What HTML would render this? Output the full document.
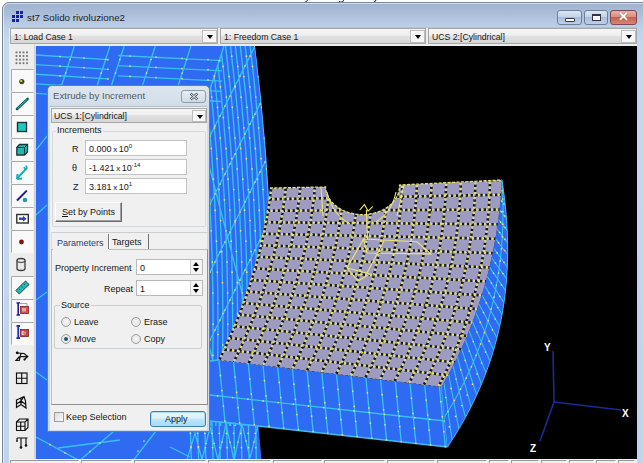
<!DOCTYPE html>
<html><head><meta charset="utf-8">
<style>
*{margin:0;padding:0;box-sizing:border-box}
html,body{width:643px;height:463px;overflow:hidden;background:#fff;font-family:"Liberation Sans",sans-serif;color:#000}
.a{position:absolute}
#frame{left:2px;top:2px;width:650px;height:470px;border:1px solid #7a8796;border-radius:7px 7px 0 0;background:linear-gradient(#9fb3cf 0,#a9bdd8 10px,#bcd0e8 24px,#c6d8ec 40px,#c0d4ea 100%)}
#frame2{left:3px;top:3px;width:650px;height:470px;border:1px solid rgba(255,255,255,.55);border-radius:6px 6px 0 0}
#title{left:27px;top:12px;font-size:9.8px;color:#1e1e1e;white-space:nowrap}
#ico{left:11px;top:11px;width:13px;height:13px}
.wb{position:absolute;top:10px;height:15px;border:1px solid #6f7f98;border-radius:3px;background:linear-gradient(#dbe6f4,#c2d3ea 45%,#a9bedc 50%,#bcd0ea)}
#cls{background:linear-gradient(#eab0a6,#dc8e82 45%,#c95e4e 50%,#d98676);border-color:#7b4a52}
#strip{left:9px;top:27px;width:628px;height:19px;background:#ececec;border-top:1px solid #b7c2cf}
.combo{position:absolute;height:16px;top:28px;border:1px solid #a7a7a7;background:linear-gradient(#f6f6f6 0,#efefef 45%,#e1e1e1 50%,#d6d6d6 100%);font-size:8.7px;color:#151515;padding:3px 0 0 3px;white-space:nowrap}
.dd{position:absolute;right:0px;top:1px;width:15px;height:13px;background:#f7f7f7;border:1px solid #bdbdbd}
.dd:after{content:"";position:absolute;left:3.5px;top:4px;border-left:3.5px solid transparent;border-right:3.5px solid transparent;border-top:4px solid #000}
#tb{left:9px;top:44px;width:26px;height:415px;background:#ededed;border-right:1px solid #d4d4d4}
#view{left:36px;top:46px;width:601px;height:413px;background:#000;overflow:hidden}
#status{left:9px;top:459px;width:628px;height:4px;background:#f0f0f0;overflow:hidden}
.btn{position:absolute;left:2px;width:22px;height:23px;border-top:1px solid #a8a8a8;border-left:1px solid #a8a8a8;border-right:1px solid #fff;background:#f8f8f8}
#dlg{left:47px;top:85px;width:163px;height:347px;border:1px solid #6f7d8d;border-radius:5px 5px 0 0;background:linear-gradient(#dde5ee,#d3dde8 20px,#cbd7e3)}
.in{position:absolute;background:#f0f0f0}
.lbl{position:absolute;font-size:9px;color:#151515;white-space:nowrap}
.fld{position:absolute;background:#fff;border:1px solid #c3c3c3;font-size:9px;color:#151515;padding:3px 0 0 3px;white-space:nowrap}
.fld sup{font-size:6px;vertical-align:0;position:relative;top:-4px}
.grp{position:absolute;border:1px solid #d3d9de;border-radius:2px}
.radio{position:absolute;width:10px;height:10px;border-radius:50%;border:1px solid #a0a0a0;background:radial-gradient(#fbfbfb,#d9d9d9)}
.spin{position:absolute;right:0;top:0;width:12px;height:14px;border-left:1px solid #d0d0d0;background:#f4f4f4}
.spin:before{content:"";position:absolute;left:2px;top:2px;border-left:3.5px solid transparent;border-right:3.5px solid transparent;border-bottom:4px solid #000}
.spin:after{content:"";position:absolute;left:2px;top:8px;border-left:3.5px solid transparent;border-right:3.5px solid transparent;border-top:4px solid #000}
</style></head><body>
<svg class="a" id="desc" style="left:0;top:0" width="643" height="4"><path d="M307.5,0 Q307,2 305,2.2 M343.5,0 Q343.5,2.2 341,2.2 Q339.5,2.2 339,1 M376,0 Q375.5,2 373.5,2.2" stroke="#222" stroke-width="1" fill="none"/></svg>
<div class="a" id="frame"></div>
<div class="a" id="frame2"></div>
<svg class="a" id="ico" viewBox="0 0 13 13"><g fill="#1420a8"><rect x="5" y="0" width="3" height="3"/><rect x="9" y="0" width="3" height="3"/><rect x="1" y="4" width="3" height="3"/><rect x="5" y="4" width="3" height="3"/><rect x="9" y="4" width="3" height="3"/><rect x="1" y="8" width="3" height="3"/><rect x="5" y="8" width="3" height="3"/></g></svg>
<div class="a" id="title">st7 Solido rivoluzione2</div>
<div class="wb" style="left:557px;width:25px"><div style="position:absolute;left:7px;top:7px;width:10px;height:4px;border:1px solid #334;background:#fff;border-radius:1px"></div></div>
<div class="wb" style="left:584px;width:24px"><div style="position:absolute;left:7px;top:3px;width:9px;height:7px;border:1px solid #334;border-top-width:2px;background:#fff"></div></div>
<div class="wb" id="cls" style="left:610px;width:27px"><div style="position:absolute;left:7px;top:-2px;color:#fff;font-size:13px;font-weight:bold;text-shadow:0 0 1px #633">&#x2715;</div></div>
<div class="a" id="strip"></div>
<div class="combo" style="left:10px;width:208px">1: Load Case 1<div class="dd"></div></div>
<div class="combo" style="left:220px;width:206px">1: Freedom Case 1<div class="dd"></div></div>
<div class="combo" style="left:428px;width:209px">UCS 2:[Cylindrical]<div class="dd"></div></div>
<div class="a" id="tb">
<svg width="26" height="415" viewBox="9 44 26 415" style="position:absolute;left:0;top:0">
<g fill="#707070">
<rect x="15.6" y="51.5" width="1.8" height="1.8"/><rect x="15.6" y="55.1" width="1.8" height="1.8"/><rect x="15.6" y="58.7" width="1.8" height="1.8"/><rect x="15.6" y="62.3" width="1.8" height="1.8"/><rect x="19.1" y="51.5" width="1.8" height="1.8"/><rect x="19.1" y="55.1" width="1.8" height="1.8"/><rect x="19.1" y="58.7" width="1.8" height="1.8"/><rect x="19.1" y="62.3" width="1.8" height="1.8"/><rect x="22.6" y="51.5" width="1.8" height="1.8"/><rect x="22.6" y="55.1" width="1.8" height="1.8"/><rect x="22.6" y="58.7" width="1.8" height="1.8"/><rect x="22.6" y="62.3" width="1.8" height="1.8"/><rect x="26.1" y="51.5" width="1.8" height="1.8"/><rect x="26.1" y="55.1" width="1.8" height="1.8"/><rect x="26.1" y="58.7" width="1.8" height="1.8"/><rect x="26.1" y="62.3" width="1.8" height="1.8"/></g>
<path d="M11,91 V69 M11,69 H33" stroke="#a9a9a9" stroke-width="1" fill="none" transform="translate(0.5,0.5)"/><rect x="12" y="70" width="21" height="22" fill="#f9f9f9"/><path d="M11,114 V92 M11,92 H33" stroke="#a9a9a9" stroke-width="1" fill="none" transform="translate(0.5,0.5)"/><rect x="12" y="93" width="21" height="22" fill="#f9f9f9"/><path d="M11,137 V115 M11,115 H33" stroke="#a9a9a9" stroke-width="1" fill="none" transform="translate(0.5,0.5)"/><rect x="12" y="116" width="21" height="22" fill="#f9f9f9"/><path d="M11,160 V138 M11,138 H33" stroke="#a9a9a9" stroke-width="1" fill="none" transform="translate(0.5,0.5)"/><rect x="12" y="139" width="21" height="22" fill="#f9f9f9"/><path d="M11,183 V161 M11,161 H33" stroke="#a9a9a9" stroke-width="1" fill="none" transform="translate(0.5,0.5)"/><rect x="12" y="162" width="21" height="22" fill="#f9f9f9"/><path d="M11,206 V184 M11,184 H33" stroke="#a9a9a9" stroke-width="1" fill="none" transform="translate(0.5,0.5)"/><rect x="12" y="185" width="21" height="22" fill="#f9f9f9"/><path d="M11,229 V207 M11,207 H33" stroke="#a9a9a9" stroke-width="1" fill="none" transform="translate(0.5,0.5)"/><rect x="12" y="208" width="21" height="22" fill="#f9f9f9"/><path d="M11,252 V230 M11,230 H33" stroke="#a9a9a9" stroke-width="1" fill="none" transform="translate(0.5,0.5)"/><rect x="12" y="231" width="21" height="22" fill="#f9f9f9"/><path d="M11,298 V276 M11,276 H33" stroke="#a9a9a9" stroke-width="1" fill="none" transform="translate(0.5,0.5)"/><rect x="12" y="277" width="21" height="22" fill="#f9f9f9"/><path d="M11,321 V299 M11,299 H33" stroke="#a9a9a9" stroke-width="1" fill="none" transform="translate(0.5,0.5)"/><rect x="12" y="300" width="21" height="22" fill="#f9f9f9"/><path d="M11,344 V322 M11,322 H33" stroke="#a9a9a9" stroke-width="1" fill="none" transform="translate(0.5,0.5)"/><rect x="12" y="323" width="21" height="22" fill="#f9f9f9"/>
<circle cx="21.8" cy="81.6" r="2.6" fill="#4a4a1a"/><circle cx="21.2" cy="81" r="1.1" fill="#e0e060"/>
<path d="M17,109 L27.6,99" stroke="#0d5a5a" stroke-width="2.6" stroke-linecap="round"/><path d="M17.5,108.5 L27,99.5" stroke="#2ac8c8" stroke-width="1"/>
<rect x="17.5" y="122.5" width="9" height="9" fill="#20c8c0" stroke="#17393a" stroke-width="1.4"/>
<path d="M16.8,147.5 L19.5,144.5 L27.5,144.5 L27.5,152 L24.5,155 L16.8,155 Z" fill="#20b8b0" stroke="#17393a" stroke-width="1.3"/><path d="M16.8,147.5 H24.5 V155 M24.5,147.5 L27.5,144.5" stroke="#17393a" stroke-width="1" fill="none"/>
<path d="M17.5,178 L27,168" stroke="#18b0b0" stroke-width="2"/><path d="M17,179 L17.5,174 M17,179 L22,178.5" stroke="#18b0b0" stroke-width="2"/><path d="M24,167 L25,170 M26,165.5 L27,168.5 M27.5,167 L24.5,169" stroke="#18b0b0" stroke-width="1.4"/>
<path d="M17,200.5 L26.8,190.6" stroke="#1a1f8a" stroke-width="2"/><circle cx="25" cy="200" r="2.3" fill="#1aa0a0"/>
<rect x="16.8" y="214.5" width="11.5" height="8.5" fill="#fff" stroke="#303030" stroke-width="1.4"/><path d="M19,217.5 H23 V215.8 L26.5,218.8 L23,221.8 V220 H19 Z" fill="#2a40d0"/>
<circle cx="21.5" cy="242" r="2.4" fill="#8a1010"/>
<path d="M17,260.5 A4,2 0 0 1 25,260.5 V268.5 A4,2 0 0 1 17,268.5 Z" fill="#e8e8e8" stroke="#3a3a3a" stroke-width="1.3"/><path d="M17,260.5 A4,2 0 0 0 25,260.5" stroke="#3a3a3a" stroke-width="1" fill="none"/>
<path d="M15.8,290.5 L25.5,281 L29,284.5 L19.3,294 Z" fill="#22b8b8" stroke="#1d4a4a" stroke-width="1"/><path d="M19,289 L20,290 M21.5,286.5 L22.5,287.5 M24,284 L25,285" stroke="#1d4a4a" stroke-width="0.8"/>
<path d="M16.5,303 H20 M18.2,303 V315 M16.5,315 H20" stroke="#1a2090" stroke-width="1.6"/><path d="M19,303.5 H27 V306" stroke="#909090" stroke-width="0.8" fill="none"/><rect x="20.5" y="306.5" width="8" height="7" fill="#d05050" stroke="#802020" stroke-width="0.8"/><rect x="22" y="308" width="4" height="3.5" fill="#f0a0a0"/>
<path d="M16.5,326 H20 M18.2,326 V338 M16.5,338 H20" stroke="#1a30d0" stroke-width="1.8"/><rect x="20.5" y="329.5" width="8" height="7" fill="#c04848" stroke="#802020" stroke-width="0.8"/><path d="M22,331.5 h2 M22,333 h2 M22,334.5 h2 M22,331.5 v3 M25,331.5 v3" stroke="#fff" stroke-width="0.7"/>
<g stroke="#101010" stroke-width="1.15" fill="none">
<path d="M17.2,353 L24,353.5 L27.8,356.5 L24.5,359.5 M21,353.5 L19.2,360.5 L16,360.5 L19.5,356.5 M20,356.6 L27.8,356.5" stroke-width="1.2"/>
<rect x="16.5" y="373" width="10.5" height="10.5"/><path d="M21.7,373 V383.5 M16.5,378.2 H27"/>
<path d="M16.5,400 L24,396.5 L25.5,401 L26,408 L21,404.5 L16.5,407.5 Z M21,398 L21,404.5 M16.5,404 L21,401 L25.8,404.5 M24,396.5 L21,401" stroke-width="1.2"/>
<path d="M16.5,422 L19.5,419 H28 V427.5 L25,430.5 H16.5 Z M16.5,422 H25 V430.5 M25,422 L28,419 M20.7,422 V430.5 M16.5,426.2 H25"/>
<path d="M17,438 H27.5 M17,438 V440.5 M21,438 V447 M26,438 V445"/>
</g>
<g fill="#101010"><circle cx="21" cy="447.5" r="1.3"/><circle cx="26" cy="445.5" r="1.3"/><circle cx="17" cy="441" r="0.9"/><circle cx="17.2" cy="352.8" r="1.4"/><circle cx="24.5" cy="359.6" r="1.1"/></g>
</svg></div>
<div class="a" id="view"><!--VIEW--><svg width="601" height="413" viewBox="36 46 601 413" style="position:absolute;left:0;top:0"><defs><clipPath id="lbc"><path d="M30,40 L255,40 L255,46 Q277,219.4 272,397 L258.5,426 L262.4,470 L30,470 Z"/></clipPath></defs><path d="M30,40 L255,40 L255,46 Q277,219.4 272,397 L258.5,426 L262.4,470 L30,470 Z" fill="#2e6af2"/><defs><clipPath id="sfc"><path d="M224,46 L255,46 Q277,219.4 272,397 L258.5,426 L200,426 L200,120 Z"/></clipPath></defs><g clip-path="url(#lbc)"><path d="M36,55.0 L108,59.7 M36,64.6 L108,69.3 M36,74.2 L108,78.9 M36,83.8 L108,88.5 M36,93.4 L108,98.1 M118,55.5 L222,60.7 M118,65.7 L222,70.9 M118,75.9 L222,81.1 M118,86.1 L222,91.3 M118,96.3 L222,101.5 M74.4,46 L56.9,100 M110.0,46 L92.5,100 M124.2,46 L106.7,100 M155.3,46 L137.8,100 M191.0,46 L173.5,100 M224,46 L200,120 M190.0,421 L191.5,462 M197.3,421 L198.7,462 M204.6,421 L205.9,462 M211.9,421 L213.1,462 M219.2,421 L220.3,462 M226.5,421 L227.5,462 M233.8,421 L234.7,462 M241.1,421 L241.9,462 M248.4,421 L249.1,462 M255.7,421 L256.3,462 M263.0,421 L263.5,462 M187.0,460.0 L195.0,433.0 L202.0,460.0 L210.0,427.0 L218.0,460.0 L226.0,424.0 L234.0,460.0 L242.0,424.0 L250.0,458.0 L258.0,426.0 M170,447 L190,457 M36,437 L82,462 M114,431 L78,462 M156,431 L132,462 M58,448 L120,440 M36,150 L47,136 M36,215 L47,205 M36,300 L47,292 M36,372 L47,380" stroke="#38c0f0" stroke-width="1.35" fill="none" /><g fill="#e8e070"><circle cx="60.0" cy="56.6" r="0.85"/><circle cx="84.0" cy="58.1" r="0.85"/><circle cx="108.0" cy="59.7" r="0.85"/><circle cx="60.0" cy="66.2" r="0.85"/><circle cx="84.0" cy="67.7" r="0.85"/><circle cx="108.0" cy="69.3" r="0.85"/><circle cx="60.0" cy="75.8" r="0.85"/><circle cx="84.0" cy="77.3" r="0.85"/><circle cx="108.0" cy="78.9" r="0.85"/><circle cx="60.0" cy="85.4" r="0.85"/><circle cx="84.0" cy="86.9" r="0.85"/><circle cx="108.0" cy="88.5" r="0.85"/><circle cx="60.0" cy="95.0" r="0.85"/><circle cx="84.0" cy="96.5" r="0.85"/><circle cx="108.0" cy="98.1" r="0.85"/><circle cx="130.0" cy="56.0" r="0.85"/><circle cx="156.0" cy="57.2" r="0.85"/><circle cx="182.0" cy="58.3" r="0.85"/><circle cx="208.0" cy="59.5" r="0.85"/><circle cx="130.0" cy="66.2" r="0.85"/><circle cx="156.0" cy="67.4" r="0.85"/><circle cx="182.0" cy="68.5" r="0.85"/><circle cx="208.0" cy="69.7" r="0.85"/><circle cx="130.0" cy="76.4" r="0.85"/><circle cx="156.0" cy="77.6" r="0.85"/><circle cx="182.0" cy="78.7" r="0.85"/><circle cx="208.0" cy="79.9" r="0.85"/><circle cx="130.0" cy="86.6" r="0.85"/><circle cx="156.0" cy="87.8" r="0.85"/><circle cx="182.0" cy="88.9" r="0.85"/><circle cx="208.0" cy="90.1" r="0.85"/><circle cx="130.0" cy="96.8" r="0.85"/><circle cx="156.0" cy="98.0" r="0.85"/><circle cx="182.0" cy="99.1" r="0.85"/><circle cx="208.0" cy="100.3" r="0.85"/><circle cx="70.0" cy="59.5" r="0.85"/><circle cx="65.7" cy="73.0" r="0.85"/><circle cx="61.3" cy="86.5" r="0.85"/><circle cx="105.6" cy="59.5" r="0.85"/><circle cx="101.2" cy="73.0" r="0.85"/><circle cx="96.9" cy="86.5" r="0.85"/><circle cx="119.8" cy="59.5" r="0.85"/><circle cx="115.5" cy="73.0" r="0.85"/><circle cx="111.1" cy="86.5" r="0.85"/><circle cx="150.9" cy="59.5" r="0.85"/><circle cx="146.6" cy="73.0" r="0.85"/><circle cx="142.2" cy="86.5" r="0.85"/><circle cx="186.6" cy="59.5" r="0.85"/><circle cx="182.2" cy="73.0" r="0.85"/><circle cx="177.9" cy="86.5" r="0.85"/><circle cx="219.2" cy="60.8" r="0.85"/><circle cx="214.4" cy="75.6" r="0.85"/><circle cx="209.6" cy="90.4" r="0.85"/><circle cx="204.8" cy="105.2" r="0.85"/><circle cx="190.4" cy="433.3" r="0.85"/><circle cx="191.0" cy="447.6" r="0.85"/><circle cx="191.4" cy="459.9" r="0.85"/><circle cx="197.6" cy="433.3" r="0.85"/><circle cx="198.2" cy="447.6" r="0.85"/><circle cx="198.6" cy="459.9" r="0.85"/><circle cx="204.8" cy="433.3" r="0.85"/><circle cx="205.4" cy="447.6" r="0.85"/><circle cx="205.8" cy="459.9" r="0.85"/><circle cx="212.0" cy="433.3" r="0.85"/><circle cx="212.6" cy="447.6" r="0.85"/><circle cx="213.0" cy="459.9" r="0.85"/><circle cx="219.2" cy="433.3" r="0.85"/><circle cx="219.8" cy="447.6" r="0.85"/><circle cx="220.2" cy="459.9" r="0.85"/><circle cx="226.4" cy="433.3" r="0.85"/><circle cx="227.0" cy="447.6" r="0.85"/><circle cx="227.4" cy="459.9" r="0.85"/><circle cx="233.6" cy="433.3" r="0.85"/><circle cx="234.2" cy="447.6" r="0.85"/><circle cx="234.6" cy="459.9" r="0.85"/><circle cx="240.8" cy="433.3" r="0.85"/><circle cx="241.4" cy="447.6" r="0.85"/><circle cx="241.8" cy="459.9" r="0.85"/><circle cx="248.0" cy="433.3" r="0.85"/><circle cx="248.6" cy="447.6" r="0.85"/><circle cx="249.0" cy="459.9" r="0.85"/><circle cx="255.2" cy="433.3" r="0.85"/><circle cx="255.8" cy="447.6" r="0.85"/><circle cx="256.2" cy="459.9" r="0.85"/><circle cx="262.4" cy="433.3" r="0.85"/><circle cx="263.0" cy="447.6" r="0.85"/><circle cx="263.4" cy="459.9" r="0.85"/><circle cx="191.0" cy="446.5" r="0.85"/><circle cx="198.5" cy="446.5" r="0.85"/><circle cx="206.0" cy="443.5" r="0.85"/><circle cx="214.0" cy="443.5" r="0.85"/><circle cx="222.0" cy="442.0" r="0.85"/><circle cx="230.0" cy="442.0" r="0.85"/><circle cx="238.0" cy="442.0" r="0.85"/><circle cx="246.0" cy="441.0" r="0.85"/><circle cx="254.0" cy="442.0" r="0.85"/><circle cx="50.0" cy="444.6" r="0.85"/><circle cx="65.0" cy="452.8" r="0.85"/><circle cx="100.0" cy="443.0" r="0.85"/><circle cx="90.0" cy="451.5" r="0.85"/><circle cx="144.0" cy="441.0" r="0.85"/><circle cx="138.0" cy="451.0" r="0.85"/></g></g><g clip-path="url(#sfc)"><path d="M255.0,46.0 Q280.0,250.0 268.0,460.0 M250.1,46.0 Q275.1,250.0 263.1,460.0 M245.2,46.0 Q270.2,250.0 258.2,460.0 M240.3,46.0 Q265.3,250.0 253.3,460.0 M235.4,46.0 Q260.4,250.0 248.4,460.0 M230.5,46.0 Q255.5,250.0 243.5,460.0 M225.6,46.0 Q250.6,250.0 238.6,460.0 M220.7,46.0 Q245.7,250.0 233.7,460.0 M215.8,46.0 Q240.8,250.0 228.8,460.0 M210.9,46.0 Q235.9,250.0 223.9,460.0 M206.0,46.0 Q231.0,250.0 219.0,460.0 M201.1,46.0 Q226.1,250.0 214.1,460.0 M196.2,46.0 Q221.2,250.0 209.2,460.0 M191.3,46.0 Q216.3,250.0 204.3,460.0 M186.4,46.0 Q211.4,250.0 199.4,460.0 M275.0,6.0 L205.0,146.0 M275.0,74.0 L205.0,214.0 M275.0,142.0 L205.0,282.0 M275.0,210.0 L205.0,350.0 M275.0,278.0 L205.0,418.0 M275.0,346.0 L205.0,486.0 M275.0,414.0 L205.0,554.0 M205.0,150.0 L275.0,420.0 M205.0,330.0 L275.0,600.0" stroke="#38c0f0" stroke-width="1.35" fill="none" /><g fill="#e8e070"><circle cx="258.5" cy="76.6" r="0.85"/><circle cx="261.7" cy="107.3" r="0.85"/><circle cx="264.4" cy="138.1" r="0.85"/><circle cx="266.7" cy="168.9" r="0.85"/><circle cx="268.5" cy="199.8" r="0.85"/><circle cx="270.0" cy="230.8" r="0.85"/><circle cx="271.1" cy="261.9" r="0.85"/><circle cx="271.7" cy="293.0" r="0.85"/><circle cx="271.9" cy="324.1" r="0.85"/><circle cx="271.7" cy="355.4" r="0.85"/><circle cx="271.1" cy="386.7" r="0.85"/><circle cx="270.0" cy="418.1" r="0.85"/><circle cx="268.6" cy="449.5" r="0.85"/><circle cx="252.5" cy="66.4" r="0.85"/><circle cx="255.8" cy="97.1" r="0.85"/><circle cx="258.6" cy="127.8" r="0.85"/><circle cx="261.1" cy="158.7" r="0.85"/><circle cx="263.1" cy="189.5" r="0.85"/><circle cx="264.7" cy="220.5" r="0.85"/><circle cx="265.9" cy="251.5" r="0.85"/><circle cx="266.6" cy="282.6" r="0.85"/><circle cx="267.0" cy="313.7" r="0.85"/><circle cx="266.9" cy="345.0" r="0.85"/><circle cx="266.4" cy="376.2" r="0.85"/><circle cx="265.5" cy="407.6" r="0.85"/><circle cx="264.2" cy="439.0" r="0.85"/><circle cx="246.4" cy="56.2" r="0.85"/><circle cx="249.8" cy="86.9" r="0.85"/><circle cx="252.8" cy="117.6" r="0.85"/><circle cx="255.4" cy="148.4" r="0.85"/><circle cx="257.5" cy="179.2" r="0.85"/><circle cx="259.3" cy="210.2" r="0.85"/><circle cx="260.6" cy="241.2" r="0.85"/><circle cx="261.5" cy="272.2" r="0.85"/><circle cx="262.0" cy="303.3" r="0.85"/><circle cx="262.1" cy="334.5" r="0.85"/><circle cx="261.7" cy="365.8" r="0.85"/><circle cx="261.0" cy="397.1" r="0.85"/><circle cx="259.8" cy="428.5" r="0.85"/><circle cx="243.8" cy="76.6" r="0.85"/><circle cx="247.0" cy="107.3" r="0.85"/><circle cx="249.7" cy="138.1" r="0.85"/><circle cx="252.0" cy="168.9" r="0.85"/><circle cx="253.8" cy="199.8" r="0.85"/><circle cx="255.3" cy="230.8" r="0.85"/><circle cx="256.4" cy="261.9" r="0.85"/><circle cx="257.0" cy="293.0" r="0.85"/><circle cx="257.2" cy="324.1" r="0.85"/><circle cx="257.0" cy="355.4" r="0.85"/><circle cx="256.4" cy="386.7" r="0.85"/><circle cx="255.3" cy="418.1" r="0.85"/><circle cx="253.9" cy="449.5" r="0.85"/><circle cx="237.8" cy="66.4" r="0.85"/><circle cx="241.1" cy="97.1" r="0.85"/><circle cx="243.9" cy="127.8" r="0.85"/><circle cx="246.4" cy="158.7" r="0.85"/><circle cx="248.4" cy="189.5" r="0.85"/><circle cx="250.0" cy="220.5" r="0.85"/><circle cx="251.1" cy="251.5" r="0.85"/><circle cx="251.9" cy="282.6" r="0.85"/><circle cx="252.3" cy="313.7" r="0.85"/><circle cx="252.2" cy="345.0" r="0.85"/><circle cx="251.7" cy="376.2" r="0.85"/><circle cx="250.8" cy="407.6" r="0.85"/><circle cx="249.5" cy="439.0" r="0.85"/><circle cx="231.7" cy="56.2" r="0.85"/><circle cx="235.1" cy="86.9" r="0.85"/><circle cx="238.1" cy="117.6" r="0.85"/><circle cx="240.7" cy="148.4" r="0.85"/><circle cx="242.8" cy="179.2" r="0.85"/><circle cx="244.6" cy="210.2" r="0.85"/><circle cx="245.9" cy="241.2" r="0.85"/><circle cx="246.8" cy="272.2" r="0.85"/><circle cx="247.3" cy="303.3" r="0.85"/><circle cx="247.4" cy="334.5" r="0.85"/><circle cx="247.0" cy="365.8" r="0.85"/><circle cx="246.3" cy="397.1" r="0.85"/><circle cx="245.1" cy="428.5" r="0.85"/><circle cx="229.1" cy="76.6" r="0.85"/><circle cx="232.3" cy="107.3" r="0.85"/><circle cx="235.0" cy="138.1" r="0.85"/><circle cx="237.3" cy="168.9" r="0.85"/><circle cx="239.1" cy="199.8" r="0.85"/><circle cx="240.6" cy="230.8" r="0.85"/><circle cx="241.7" cy="261.9" r="0.85"/><circle cx="242.3" cy="293.0" r="0.85"/><circle cx="242.5" cy="324.1" r="0.85"/><circle cx="242.3" cy="355.4" r="0.85"/><circle cx="241.7" cy="386.7" r="0.85"/><circle cx="240.6" cy="418.1" r="0.85"/><circle cx="239.2" cy="449.5" r="0.85"/><circle cx="223.1" cy="66.4" r="0.85"/><circle cx="226.4" cy="97.1" r="0.85"/><circle cx="229.2" cy="127.8" r="0.85"/><circle cx="231.7" cy="158.7" r="0.85"/><circle cx="233.7" cy="189.5" r="0.85"/><circle cx="235.3" cy="220.5" r="0.85"/><circle cx="236.4" cy="251.5" r="0.85"/><circle cx="237.2" cy="282.6" r="0.85"/><circle cx="237.6" cy="313.7" r="0.85"/><circle cx="237.5" cy="345.0" r="0.85"/><circle cx="237.0" cy="376.2" r="0.85"/><circle cx="236.1" cy="407.6" r="0.85"/><circle cx="234.8" cy="439.0" r="0.85"/><circle cx="217.0" cy="56.2" r="0.85"/><circle cx="220.4" cy="86.9" r="0.85"/><circle cx="223.4" cy="117.6" r="0.85"/><circle cx="226.0" cy="148.4" r="0.85"/><circle cx="228.1" cy="179.2" r="0.85"/><circle cx="229.9" cy="210.2" r="0.85"/><circle cx="231.2" cy="241.2" r="0.85"/><circle cx="232.1" cy="272.2" r="0.85"/><circle cx="232.6" cy="303.3" r="0.85"/><circle cx="232.7" cy="334.5" r="0.85"/><circle cx="232.3" cy="365.8" r="0.85"/><circle cx="231.6" cy="397.1" r="0.85"/><circle cx="230.4" cy="428.5" r="0.85"/><circle cx="214.4" cy="76.6" r="0.85"/><circle cx="217.6" cy="107.3" r="0.85"/><circle cx="220.3" cy="138.1" r="0.85"/><circle cx="222.6" cy="168.9" r="0.85"/><circle cx="224.4" cy="199.8" r="0.85"/><circle cx="225.9" cy="230.8" r="0.85"/><circle cx="227.0" cy="261.9" r="0.85"/><circle cx="227.6" cy="293.0" r="0.85"/><circle cx="227.8" cy="324.1" r="0.85"/><circle cx="227.6" cy="355.4" r="0.85"/><circle cx="227.0" cy="386.7" r="0.85"/><circle cx="225.9" cy="418.1" r="0.85"/><circle cx="224.5" cy="449.5" r="0.85"/><circle cx="208.4" cy="66.4" r="0.85"/><circle cx="211.7" cy="97.1" r="0.85"/><circle cx="214.5" cy="127.8" r="0.85"/><circle cx="217.0" cy="158.7" r="0.85"/><circle cx="219.0" cy="189.5" r="0.85"/><circle cx="220.6" cy="220.5" r="0.85"/><circle cx="221.8" cy="251.5" r="0.85"/><circle cx="222.5" cy="282.6" r="0.85"/><circle cx="222.9" cy="313.7" r="0.85"/><circle cx="222.8" cy="345.0" r="0.85"/><circle cx="222.3" cy="376.2" r="0.85"/><circle cx="221.4" cy="407.6" r="0.85"/><circle cx="220.1" cy="439.0" r="0.85"/><circle cx="202.3" cy="56.2" r="0.85"/><circle cx="205.7" cy="86.9" r="0.85"/><circle cx="208.7" cy="117.6" r="0.85"/><circle cx="211.3" cy="148.4" r="0.85"/><circle cx="213.4" cy="179.2" r="0.85"/><circle cx="215.2" cy="210.2" r="0.85"/><circle cx="216.5" cy="241.2" r="0.85"/><circle cx="217.4" cy="272.2" r="0.85"/><circle cx="217.9" cy="303.3" r="0.85"/><circle cx="218.0" cy="334.5" r="0.85"/><circle cx="217.6" cy="365.8" r="0.85"/><circle cx="216.9" cy="397.1" r="0.85"/><circle cx="215.7" cy="428.5" r="0.85"/><circle cx="199.7" cy="76.6" r="0.85"/><circle cx="202.9" cy="107.3" r="0.85"/><circle cx="205.6" cy="138.1" r="0.85"/><circle cx="207.9" cy="168.9" r="0.85"/><circle cx="209.7" cy="199.8" r="0.85"/><circle cx="211.2" cy="230.8" r="0.85"/><circle cx="212.3" cy="261.9" r="0.85"/><circle cx="212.9" cy="293.0" r="0.85"/><circle cx="213.1" cy="324.1" r="0.85"/><circle cx="212.9" cy="355.4" r="0.85"/><circle cx="212.3" cy="386.7" r="0.85"/><circle cx="211.2" cy="418.1" r="0.85"/><circle cx="209.8" cy="449.5" r="0.85"/><circle cx="193.7" cy="66.4" r="0.85"/><circle cx="197.0" cy="97.1" r="0.85"/><circle cx="199.8" cy="127.8" r="0.85"/><circle cx="202.3" cy="158.7" r="0.85"/><circle cx="204.3" cy="189.5" r="0.85"/><circle cx="205.9" cy="220.5" r="0.85"/><circle cx="207.1" cy="251.5" r="0.85"/><circle cx="207.8" cy="282.6" r="0.85"/><circle cx="208.2" cy="313.7" r="0.85"/><circle cx="208.1" cy="345.0" r="0.85"/><circle cx="207.6" cy="376.2" r="0.85"/><circle cx="206.7" cy="407.6" r="0.85"/><circle cx="205.4" cy="439.0" r="0.85"/><circle cx="187.6" cy="56.2" r="0.85"/><circle cx="191.0" cy="86.9" r="0.85"/><circle cx="194.0" cy="117.6" r="0.85"/><circle cx="196.6" cy="148.4" r="0.85"/><circle cx="198.7" cy="179.2" r="0.85"/><circle cx="200.5" cy="210.2" r="0.85"/><circle cx="201.8" cy="241.2" r="0.85"/><circle cx="202.7" cy="272.2" r="0.85"/><circle cx="203.2" cy="303.3" r="0.85"/><circle cx="203.3" cy="334.5" r="0.85"/><circle cx="202.9" cy="365.8" r="0.85"/><circle cx="202.2" cy="397.1" r="0.85"/><circle cx="201.0" cy="428.5" r="0.85"/><circle cx="270.0" cy="16.0" r="0.85"/><circle cx="265.0" cy="26.0" r="0.85"/><circle cx="260.0" cy="36.0" r="0.85"/><circle cx="255.0" cy="46.0" r="0.85"/><circle cx="250.0" cy="56.0" r="0.85"/><circle cx="245.0" cy="66.0" r="0.85"/><circle cx="240.0" cy="76.0" r="0.85"/><circle cx="235.0" cy="86.0" r="0.85"/><circle cx="230.0" cy="96.0" r="0.85"/><circle cx="225.0" cy="106.0" r="0.85"/><circle cx="220.0" cy="116.0" r="0.85"/><circle cx="215.0" cy="126.0" r="0.85"/><circle cx="210.0" cy="136.0" r="0.85"/><circle cx="270.0" cy="84.0" r="0.85"/><circle cx="265.0" cy="94.0" r="0.85"/><circle cx="260.0" cy="104.0" r="0.85"/><circle cx="255.0" cy="114.0" r="0.85"/><circle cx="250.0" cy="124.0" r="0.85"/><circle cx="245.0" cy="134.0" r="0.85"/><circle cx="240.0" cy="144.0" r="0.85"/><circle cx="235.0" cy="154.0" r="0.85"/><circle cx="230.0" cy="164.0" r="0.85"/><circle cx="225.0" cy="174.0" r="0.85"/><circle cx="220.0" cy="184.0" r="0.85"/><circle cx="215.0" cy="194.0" r="0.85"/><circle cx="210.0" cy="204.0" r="0.85"/><circle cx="270.0" cy="152.0" r="0.85"/><circle cx="265.0" cy="162.0" r="0.85"/><circle cx="260.0" cy="172.0" r="0.85"/><circle cx="255.0" cy="182.0" r="0.85"/><circle cx="250.0" cy="192.0" r="0.85"/><circle cx="245.0" cy="202.0" r="0.85"/><circle cx="240.0" cy="212.0" r="0.85"/><circle cx="235.0" cy="222.0" r="0.85"/><circle cx="230.0" cy="232.0" r="0.85"/><circle cx="225.0" cy="242.0" r="0.85"/><circle cx="220.0" cy="252.0" r="0.85"/><circle cx="215.0" cy="262.0" r="0.85"/><circle cx="210.0" cy="272.0" r="0.85"/><circle cx="270.0" cy="220.0" r="0.85"/><circle cx="265.0" cy="230.0" r="0.85"/><circle cx="260.0" cy="240.0" r="0.85"/><circle cx="255.0" cy="250.0" r="0.85"/><circle cx="250.0" cy="260.0" r="0.85"/><circle cx="245.0" cy="270.0" r="0.85"/><circle cx="240.0" cy="280.0" r="0.85"/><circle cx="235.0" cy="290.0" r="0.85"/><circle cx="230.0" cy="300.0" r="0.85"/><circle cx="225.0" cy="310.0" r="0.85"/><circle cx="220.0" cy="320.0" r="0.85"/><circle cx="215.0" cy="330.0" r="0.85"/><circle cx="210.0" cy="340.0" r="0.85"/><circle cx="270.0" cy="288.0" r="0.85"/><circle cx="265.0" cy="298.0" r="0.85"/><circle cx="260.0" cy="308.0" r="0.85"/><circle cx="255.0" cy="318.0" r="0.85"/><circle cx="250.0" cy="328.0" r="0.85"/><circle cx="245.0" cy="338.0" r="0.85"/><circle cx="240.0" cy="348.0" r="0.85"/><circle cx="235.0" cy="358.0" r="0.85"/><circle cx="230.0" cy="368.0" r="0.85"/><circle cx="225.0" cy="378.0" r="0.85"/><circle cx="220.0" cy="388.0" r="0.85"/><circle cx="215.0" cy="398.0" r="0.85"/><circle cx="210.0" cy="408.0" r="0.85"/><circle cx="270.0" cy="356.0" r="0.85"/><circle cx="265.0" cy="366.0" r="0.85"/><circle cx="260.0" cy="376.0" r="0.85"/><circle cx="255.0" cy="386.0" r="0.85"/><circle cx="250.0" cy="396.0" r="0.85"/><circle cx="245.0" cy="406.0" r="0.85"/><circle cx="240.0" cy="416.0" r="0.85"/><circle cx="235.0" cy="426.0" r="0.85"/><circle cx="230.0" cy="436.0" r="0.85"/><circle cx="225.0" cy="446.0" r="0.85"/><circle cx="220.0" cy="456.0" r="0.85"/><circle cx="215.0" cy="466.0" r="0.85"/><circle cx="210.0" cy="476.0" r="0.85"/><circle cx="270.0" cy="424.0" r="0.85"/><circle cx="265.0" cy="434.0" r="0.85"/><circle cx="260.0" cy="444.0" r="0.85"/><circle cx="255.0" cy="454.0" r="0.85"/><circle cx="250.0" cy="464.0" r="0.85"/><circle cx="245.0" cy="474.0" r="0.85"/><circle cx="240.0" cy="484.0" r="0.85"/><circle cx="235.0" cy="494.0" r="0.85"/><circle cx="230.0" cy="504.0" r="0.85"/><circle cx="225.0" cy="514.0" r="0.85"/><circle cx="220.0" cy="524.0" r="0.85"/><circle cx="215.0" cy="534.0" r="0.85"/><circle cx="210.0" cy="544.0" r="0.85"/></g></g><path d="M218.0,360.0 L441.6,387.0 L447.5,447.0 L258,426 L224.0,421.0 L210,421 L210,362 Z" fill="#2e6af2"/><path d="M218.9,360.1 L224.9,421.1 M233.6,361.9 L239.6,422.8 M248.3,363.7 L254.3,424.5 M263.0,365.4 L269.0,426.2 M277.7,367.2 L283.7,427.9 M292.4,369.0 L298.4,429.7 M307.1,370.8 L313.1,431.4 M321.8,372.5 L327.8,433.1 M336.5,374.3 L342.4,434.8 M351.2,376.1 L357.1,436.5 M365.9,377.9 L371.8,438.2 M380.6,379.6 L386.5,439.9 M395.3,381.4 L401.2,441.6 M410.0,383.2 L415.9,443.3 M424.7,385.0 L430.6,445.0 M439.4,386.7 L445.3,446.7 M210,395 L445,421 M441.6,387.0 L447.5,447.0 M210,421 L258,426 L447.5,447.0 M210,361 L218.0,360.0" stroke="#38c0f0" stroke-width="1.35" fill="none" /><g fill="#e8e070"><circle cx="220.4" cy="375.4" r="0.85"/><circle cx="221.9" cy="390.6" r="0.85"/><circle cx="223.4" cy="405.9" r="0.85"/><circle cx="224.9" cy="421.1" r="0.85"/><circle cx="235.1" cy="377.1" r="0.85"/><circle cx="236.6" cy="392.3" r="0.85"/><circle cx="238.1" cy="407.6" r="0.85"/><circle cx="239.6" cy="422.8" r="0.85"/><circle cx="249.8" cy="378.9" r="0.85"/><circle cx="251.3" cy="394.1" r="0.85"/><circle cx="252.8" cy="409.3" r="0.85"/><circle cx="254.3" cy="424.5" r="0.85"/><circle cx="264.5" cy="380.6" r="0.85"/><circle cx="266.0" cy="395.8" r="0.85"/><circle cx="267.5" cy="411.0" r="0.85"/><circle cx="269.0" cy="426.2" r="0.85"/><circle cx="279.2" cy="382.4" r="0.85"/><circle cx="280.7" cy="397.6" r="0.85"/><circle cx="282.2" cy="412.8" r="0.85"/><circle cx="283.7" cy="427.9" r="0.85"/><circle cx="293.9" cy="384.2" r="0.85"/><circle cx="295.4" cy="399.3" r="0.85"/><circle cx="296.9" cy="414.5" r="0.85"/><circle cx="298.4" cy="429.7" r="0.85"/><circle cx="308.6" cy="385.9" r="0.85"/><circle cx="310.1" cy="401.1" r="0.85"/><circle cx="311.6" cy="416.2" r="0.85"/><circle cx="313.1" cy="431.4" r="0.85"/><circle cx="323.3" cy="387.7" r="0.85"/><circle cx="324.8" cy="402.8" r="0.85"/><circle cx="326.3" cy="417.9" r="0.85"/><circle cx="327.8" cy="433.1" r="0.85"/><circle cx="338.0" cy="389.4" r="0.85"/><circle cx="339.5" cy="404.5" r="0.85"/><circle cx="341.0" cy="419.7" r="0.85"/><circle cx="342.4" cy="434.8" r="0.85"/><circle cx="352.7" cy="391.2" r="0.85"/><circle cx="354.2" cy="406.3" r="0.85"/><circle cx="355.7" cy="421.4" r="0.85"/><circle cx="357.1" cy="436.5" r="0.85"/><circle cx="367.4" cy="392.9" r="0.85"/><circle cx="368.9" cy="408.0" r="0.85"/><circle cx="370.4" cy="423.1" r="0.85"/><circle cx="371.8" cy="438.2" r="0.85"/><circle cx="382.1" cy="394.7" r="0.85"/><circle cx="383.6" cy="409.8" r="0.85"/><circle cx="385.0" cy="424.8" r="0.85"/><circle cx="386.5" cy="439.9" r="0.85"/><circle cx="396.8" cy="396.5" r="0.85"/><circle cx="398.3" cy="411.5" r="0.85"/><circle cx="399.7" cy="426.6" r="0.85"/><circle cx="401.2" cy="441.6" r="0.85"/><circle cx="411.5" cy="398.2" r="0.85"/><circle cx="413.0" cy="413.3" r="0.85"/><circle cx="414.4" cy="428.3" r="0.85"/><circle cx="415.9" cy="443.3" r="0.85"/><circle cx="426.2" cy="400.0" r="0.85"/><circle cx="427.7" cy="415.0" r="0.85"/><circle cx="429.1" cy="430.0" r="0.85"/><circle cx="430.6" cy="445.0" r="0.85"/><circle cx="440.9" cy="401.7" r="0.85"/><circle cx="442.4" cy="416.7" r="0.85"/><circle cx="443.8" cy="431.7" r="0.85"/><circle cx="445.3" cy="446.7" r="0.85"/><circle cx="217.6" cy="395.8" r="0.85"/><circle cx="232.7" cy="397.5" r="0.85"/><circle cx="247.9" cy="399.2" r="0.85"/><circle cx="263.1" cy="400.9" r="0.85"/><circle cx="278.2" cy="402.5" r="0.85"/><circle cx="293.4" cy="404.2" r="0.85"/><circle cx="308.5" cy="405.9" r="0.85"/><circle cx="323.7" cy="407.6" r="0.85"/><circle cx="338.9" cy="409.3" r="0.85"/><circle cx="354.0" cy="410.9" r="0.85"/><circle cx="369.2" cy="412.6" r="0.85"/><circle cx="384.4" cy="414.3" r="0.85"/><circle cx="399.5" cy="416.0" r="0.85"/><circle cx="414.7" cy="417.6" r="0.85"/><circle cx="429.8" cy="419.3" r="0.85"/><circle cx="445.0" cy="421.0" r="0.85"/></g><defs><clipPath id="rfc"><path d="M502,180 C515,265 509,355 447.5,447 L441.6,387 Q496.2,292.5 502,180 Z"/></clipPath></defs><path d="M502,180 C515,265 509,355 447.5,447 L441.6,387 Q496.2,292.5 502,180 Z" fill="#2e6af2"/><g clip-path="url(#rfc)"><path d="M502.0,180.0 L502.4,186.3 L502.6,192.6 L502.8,199.0 L503.0,205.3 L503.0,211.6 L502.9,217.9 L502.8,224.2 L502.6,230.2 L502.3,236.5 L501.9,242.5 L501.4,248.8 L500.8,254.8 L500.1,261.1 L499.3,267.1 L498.5,273.0 L497.5,279.0 L496.4,285.3 L495.3,291.2 L494.0,297.2 L492.7,303.1 L491.2,309.1 L489.7,314.7 L488.1,320.6 L486.3,326.5 L484.5,332.4 L482.6,338.0 L480.5,343.9 L478.3,349.8 L476.1,355.4 L473.7,361.2 L471.3,366.8 L468.8,372.3 L466.1,378.2 L463.3,383.7 L460.5,389.2 L457.4,395.1 L454.4,400.6 L451.2,406.0 L447.9,411.5 L444.6,417.0 M501.4,190.0 L505.3,194.8 M500.6,199.9 L506.7,207.0 M499.6,209.7 L507.9,219.9 M498.4,219.4 L508.7,232.3 M497.0,229.1 L509.1,244.7 M495.4,238.7 L509.1,256.5 M493.7,248.3 L508.8,269.0 M491.7,257.7 L508.1,280.9 M489.6,267.1 L507.0,292.9 M487.2,276.4 L505.4,304.9 M484.7,285.7 L503.5,316.9 M481.9,294.9 L501.1,329.0 M479.0,304.0 L498.3,340.4 M475.9,313.0 L494.9,352.6 M472.6,322.0 L491.3,364.1 M469.1,330.9 L487.1,375.7 M465.4,339.7 L482.5,387.2 M461.5,348.5 L477.7,398.2 M457.4,357.2 L472.0,409.8 M453.1,365.8 L466.2,420.8 M448.7,374.3 L459.5,432.5 M444.0,382.8 L452.6,443.5" stroke="#38c0f0" stroke-width="1.10" fill="none" /><g fill="#e8e070"><circle cx="502.4" cy="186.3" r="0.85"/><circle cx="502.8" cy="199.0" r="0.85"/><circle cx="503.0" cy="211.6" r="0.85"/><circle cx="502.8" cy="224.2" r="0.85"/><circle cx="502.3" cy="236.5" r="0.85"/><circle cx="501.4" cy="248.8" r="0.85"/><circle cx="500.1" cy="261.1" r="0.85"/><circle cx="498.5" cy="273.0" r="0.85"/><circle cx="496.4" cy="285.3" r="0.85"/><circle cx="494.0" cy="297.2" r="0.85"/><circle cx="491.2" cy="309.1" r="0.85"/><circle cx="488.1" cy="320.6" r="0.85"/><circle cx="484.5" cy="332.4" r="0.85"/><circle cx="480.5" cy="343.9" r="0.85"/><circle cx="476.1" cy="355.4" r="0.85"/><circle cx="471.3" cy="366.8" r="0.85"/><circle cx="466.1" cy="378.2" r="0.85"/><circle cx="460.5" cy="389.2" r="0.85"/><circle cx="454.4" cy="400.6" r="0.85"/><circle cx="447.9" cy="411.5" r="0.85"/><circle cx="502.0" cy="190.7" r="0.85"/><circle cx="503.2" cy="192.1" r="0.85"/><circle cx="501.7" cy="201.1" r="0.85"/><circle cx="504.1" cy="203.7" r="0.85"/><circle cx="501.3" cy="211.7" r="0.85"/><circle cx="504.7" cy="215.9" r="0.85"/><circle cx="500.6" cy="222.1" r="0.85"/><circle cx="505.0" cy="227.6" r="0.85"/><circle cx="499.7" cy="232.5" r="0.85"/><circle cx="504.9" cy="239.3" r="0.85"/><circle cx="498.5" cy="242.7" r="0.85"/><circle cx="504.6" cy="250.5" r="0.85"/><circle cx="497.1" cy="252.9" r="0.85"/><circle cx="503.9" cy="262.3" r="0.85"/><circle cx="495.4" cy="263.0" r="0.85"/><circle cx="502.9" cy="273.6" r="0.85"/><circle cx="493.5" cy="273.1" r="0.85"/><circle cx="501.5" cy="284.9" r="0.85"/><circle cx="491.4" cy="283.0" r="0.85"/><circle cx="499.8" cy="296.3" r="0.85"/><circle cx="489.0" cy="293.0" r="0.85"/><circle cx="497.7" cy="307.6" r="0.85"/><circle cx="486.3" cy="302.9" r="0.85"/><circle cx="495.1" cy="319.0" r="0.85"/><circle cx="483.5" cy="312.6" r="0.85"/><circle cx="492.4" cy="329.8" r="0.85"/><circle cx="480.3" cy="322.4" r="0.85"/><circle cx="489.1" cy="341.2" r="0.85"/><circle cx="476.9" cy="332.0" r="0.85"/><circle cx="485.5" cy="352.1" r="0.85"/><circle cx="473.2" cy="341.6" r="0.85"/><circle cx="481.5" cy="363.0" r="0.85"/><circle cx="469.3" cy="351.1" r="0.85"/><circle cx="477.1" cy="373.9" r="0.85"/><circle cx="465.2" cy="360.4" r="0.85"/><circle cx="472.5" cy="384.2" r="0.85"/><circle cx="460.7" cy="369.8" r="0.85"/><circle cx="467.2" cy="395.1" r="0.85"/><circle cx="456.0" cy="379.0" r="0.85"/><circle cx="461.8" cy="405.5" r="0.85"/><circle cx="451.0" cy="388.4" r="0.85"/><circle cx="455.6" cy="416.4" r="0.85"/><circle cx="445.8" cy="397.5" r="0.85"/><circle cx="449.3" cy="426.8" r="0.85"/></g></g><path d="M502,180 C515,265 509,355 447.5,447" stroke="#38c0f0" stroke-width="1.00" fill="none" /><defs><clipPath id="gc"><path d="M270,188 L325.5,187 A36.8,28.5 0 0 0 399.5,185 L502,180 Q496.2,292.5 441.6,387 L218,360 Q260.5,273.5 270,188 Z"/></clipPath></defs><path d="M270,188 L325.5,187 A36.8,28.5 0 0 0 399.5,185 L502,180 Q496.2,292.5 441.6,387 L218,360 Q260.5,273.5 270,188 Z" fill="#9d9cc0"/><g clip-path="url(#gc)"><path d="M257.5,180.1 L256.6,188.5 L255.5,196.9 L254.3,205.3 L252.9,213.7 L251.3,222.1 L249.6,230.6 L247.7,239.0 L245.7,247.5 L243.5,255.9 L241.1,264.4 L238.6,272.9 L235.9,281.4 L233.1,289.9 L230.1,298.4 L226.9,307.0 L223.6,315.5 L220.1,324.1 L216.4,332.6 L212.6,341.2 L208.7,349.8 L204.6,358.4 L200.3,367.0 M272.0,179.4 L271.2,188.0 L270.1,196.5 L268.9,205.1 L267.6,213.7 L266.1,222.3 L264.4,230.8 L262.5,239.4 L260.5,248.0 L258.3,256.6 L256.0,265.2 L253.4,273.8 L250.8,282.4 L247.9,291.1 L244.9,299.7 L241.7,308.3 L238.4,316.9 L234.9,325.6 L231.2,334.2 L227.3,342.8 L223.3,351.5 L219.2,360.1 L214.8,368.8 M286.6,178.7 L285.8,187.5 L284.8,196.2 L283.6,204.9 L282.3,213.7 L280.8,222.4 L279.2,231.1 L277.3,239.8 L275.3,248.6 L273.1,257.3 L270.8,266.0 L268.3,274.7 L265.6,283.5 L262.8,292.2 L259.7,300.9 L256.5,309.6 L253.2,318.3 L249.6,327.1 L245.9,335.8 L242.1,344.5 L238.0,353.2 L233.8,361.9 L229.4,370.6 M301.2,178.0 L300.3,187.0 L299.4,195.9 L298.3,204.7 L297.0,213.6 L295.6,222.5 L293.9,231.4 L292.1,240.2 L290.2,249.1 L288.0,258.0 L285.7,266.8 L283.1,275.6 L280.5,284.5 L277.6,293.3 L274.6,302.1 L271.4,310.9 L268.0,319.7 L264.4,328.5 L260.7,337.3 L256.8,346.1 L252.7,354.9 L248.4,363.7 L243.9,372.4 M315.7,177.4 L314.9,186.5 L314.1,195.5 L313.0,204.6 L311.8,213.6 L310.3,222.6 L308.7,231.7 L306.9,240.7 L305.0,249.7 L302.8,258.6 L300.5,267.6 L298.0,276.6 L295.3,285.5 L292.5,294.4 L289.4,303.4 L286.2,312.3 L282.8,321.2 L279.2,330.0 L275.4,338.9 L271.5,347.8 L267.3,356.6 L263.0,365.4 L258.4,374.2 M330.3,176.7 L329.5,185.9 L328.7,195.2 L327.7,204.4 L326.5,213.6 L325.1,222.8 L323.5,231.9 L321.8,241.1 L319.8,250.2 L317.7,259.3 L315.4,268.4 L312.9,277.5 L310.2,286.5 L307.3,295.6 L304.2,304.6 L301.0,313.6 L297.6,322.6 L294.0,331.5 L290.2,340.5 L286.2,349.4 L282.0,358.3 L277.6,367.2 L273.0,376.1 M344.9,176.0 L344.1,185.4 L343.3,194.8 L342.4,204.2 L341.2,213.6 L339.8,222.9 L338.3,232.2 L336.6,241.5 L334.6,250.7 L332.5,260.0 L330.2,269.2 L327.7,278.4 L325.0,287.6 L322.2,296.7 L319.1,305.8 L315.8,314.9 L312.4,324.0 L308.7,333.0 L304.9,342.1 L300.9,351.0 L296.7,360.0 L292.2,369.0 L287.5,377.9 M359.4,175.3 L358.7,184.9 L358.0,194.5 L357.0,204.0 L355.9,213.5 L354.6,223.0 L353.1,232.5 L351.4,241.9 L349.5,251.3 L347.4,260.7 L345.1,270.0 L342.6,279.3 L339.9,288.6 L337.0,297.8 L333.9,307.0 L330.6,316.2 L327.2,325.4 L323.5,334.5 L319.6,343.6 L315.6,352.7 L311.3,361.7 L306.9,370.7 L302.0,379.7 M374.0,174.7 L373.3,184.4 L372.6,194.2 L371.7,203.9 L370.6,213.5 L369.4,223.2 L367.9,232.8 L366.2,242.3 L364.3,251.8 L362.2,261.3 L359.9,270.8 L357.4,280.2 L354.7,289.6 L351.9,299.0 L348.8,308.3 L345.5,317.6 L342.0,326.8 L338.3,336.0 L334.4,345.2 L330.3,354.3 L326.0,363.4 L321.5,372.5 L316.6,381.5 M388.6,174.0 L387.9,183.9 L387.3,193.8 L386.4,203.7 L385.4,213.5 L384.1,223.3 L382.6,233.0 L381.0,242.7 L379.1,252.4 L377.0,262.0 L374.8,271.6 L372.3,281.1 L369.6,290.6 L366.7,300.1 L363.6,309.5 L360.3,318.9 L356.8,328.2 L353.1,337.5 L349.1,346.8 L345.0,356.0 L340.6,365.1 L336.1,374.3 L331.1,383.3 M403.1,173.3 L402.5,183.4 L401.9,193.5 L401.1,203.5 L400.1,213.5 L398.9,223.4 L397.4,233.3 L395.8,243.1 L393.9,252.9 L391.9,262.7 L389.6,272.4 L387.1,282.0 L384.4,291.7 L381.5,301.2 L378.4,310.7 L375.1,320.2 L371.6,329.6 L367.8,339.0 L363.9,348.3 L359.7,357.6 L355.3,366.8 L350.7,376.0 L345.6,385.1 M417.7,172.6 L417.1,182.9 L416.5,193.2 L415.8,203.3 L414.8,213.5 L413.6,223.5 L412.2,233.6 L410.6,243.6 L408.8,253.5 L406.7,263.4 L404.5,273.2 L402.0,283.0 L399.3,292.7 L396.4,302.4 L393.3,312.0 L389.9,321.5 L386.4,331.0 L382.6,340.5 L378.6,349.9 L374.4,359.3 L370.0,368.5 L365.3,377.8 L360.2,386.9 M432.3,172.0 L431.7,182.4 L431.2,192.8 L430.5,203.2 L429.5,213.4 L428.4,223.7 L427.0,233.8 L425.4,244.0 L423.6,254.0 L421.6,264.0 L419.3,274.0 L416.9,283.9 L414.2,293.7 L411.2,303.5 L408.1,313.2 L404.8,322.9 L401.2,332.5 L397.4,342.0 L393.3,351.5 L389.1,360.9 L384.6,370.3 L379.9,379.6 L374.7,388.8 M446.8,171.3 L446.3,181.9 L445.8,192.5 L445.1,203.0 L444.2,213.4 L443.1,223.8 L441.8,234.1 L440.2,244.4 L438.4,254.6 L436.4,264.7 L434.2,274.8 L431.7,284.8 L429.0,294.7 L426.1,304.6 L422.9,314.4 L419.6,324.2 L416.0,333.9 L412.1,343.5 L408.1,353.0 L403.8,362.5 L399.3,372.0 L394.5,381.3 L389.2,390.6 M461.4,170.6 L460.9,181.4 L460.5,192.1 L459.8,202.8 L459.0,213.4 L457.9,223.9 L456.6,234.4 L455.0,244.8 L453.3,255.1 L451.3,265.4 L449.0,275.6 L446.6,285.7 L443.9,295.8 L440.9,305.7 L437.8,315.7 L434.4,325.5 L430.8,335.3 L426.9,345.0 L422.8,354.6 L418.5,364.2 L413.9,373.7 L409.2,383.1 L403.8,392.4 M475.9,169.9 L475.4,180.9 L475.1,191.8 L474.5,202.6 L473.7,213.4 L472.6,224.1 L471.4,234.7 L469.8,245.2 L468.1,255.7 L466.1,266.1 L463.9,276.4 L461.4,286.6 L458.7,296.8 L455.8,306.9 L452.6,316.9 L449.2,326.8 L445.6,336.7 L441.7,346.5 L437.6,356.2 L433.2,365.8 L428.6,375.4 L423.8,384.8 L418.3,394.2 M490.5,169.3 L490.0,180.4 L489.7,191.5 L489.2,202.5 L488.4,213.4 L487.4,224.2 L486.1,234.9 L484.7,245.6 L482.9,256.2 L480.9,266.7 L478.7,277.2 L476.3,287.5 L473.6,297.8 L470.6,308.0 L467.5,318.1 L464.0,328.2 L460.4,338.1 L456.5,348.0 L452.3,357.8 L447.9,367.5 L443.3,377.1 L438.4,386.6 L432.8,396.0 M505.1,168.6 L504.6,179.9 L504.4,191.1 L503.9,202.3 L503.1,213.3 L502.2,224.3 L500.9,235.2 L499.5,246.0 L497.7,256.8 L495.8,267.4 L493.6,278.0 L491.1,288.4 L488.4,298.8 L485.5,309.1 L482.3,319.3 L478.9,329.5 L475.2,339.5 L471.2,349.5 L467.1,359.3 L462.6,369.1 L457.9,378.8 L453.0,388.4 L447.4,397.8 M519.6,167.9 L519.2,179.4 L519.0,190.8 L518.6,202.1 L517.9,213.3 L516.9,224.4 L515.7,235.5 L514.3,246.4 L512.6,257.3 L510.6,268.1 L508.4,278.8 L506.0,289.4 L503.3,299.9 L500.3,310.3 L497.1,320.6 L493.7,330.8 L490.0,340.9 L486.0,351.0 L481.8,360.9 L477.3,370.7 L472.6,380.5 L467.6,390.1 L461.9,399.6 M251.5,188.4 L520.6,179.1 M250.0,199.6 L519.6,194.4 M248.3,210.8 L518.2,209.5 M246.3,222.1 L516.4,224.4 M243.9,233.3 L514.0,239.2 M241.3,244.6 L511.3,253.8 M238.5,255.9 L508.1,268.3 M235.3,267.3 L504.4,282.5 M231.8,278.6 L500.3,296.6 M228.1,290.0 L495.7,310.5 M224.1,301.4 L490.7,324.2 M219.8,312.8 L485.3,337.7 M215.2,324.3 L479.3,351.1 M210.3,335.8 L473.0,364.3 M205.1,347.2 L466.2,377.3 M199.7,358.8 L458.9,390.2 M193.9,370.3 L451.2,402.8" stroke="#18181e" stroke-width="2.6" stroke-dasharray="2.5 2.4" fill="none"/><path d="M257.5,180.1 L256.6,188.5 L255.5,196.9 L254.3,205.3 L252.9,213.7 L251.3,222.1 L249.6,230.6 L247.7,239.0 L245.7,247.5 L243.5,255.9 L241.1,264.4 L238.6,272.9 L235.9,281.4 L233.1,289.9 L230.1,298.4 L226.9,307.0 L223.6,315.5 L220.1,324.1 L216.4,332.6 L212.6,341.2 L208.7,349.8 L204.6,358.4 L200.3,367.0 M272.0,179.4 L271.2,188.0 L270.1,196.5 L268.9,205.1 L267.6,213.7 L266.1,222.3 L264.4,230.8 L262.5,239.4 L260.5,248.0 L258.3,256.6 L256.0,265.2 L253.4,273.8 L250.8,282.4 L247.9,291.1 L244.9,299.7 L241.7,308.3 L238.4,316.9 L234.9,325.6 L231.2,334.2 L227.3,342.8 L223.3,351.5 L219.2,360.1 L214.8,368.8 M286.6,178.7 L285.8,187.5 L284.8,196.2 L283.6,204.9 L282.3,213.7 L280.8,222.4 L279.2,231.1 L277.3,239.8 L275.3,248.6 L273.1,257.3 L270.8,266.0 L268.3,274.7 L265.6,283.5 L262.8,292.2 L259.7,300.9 L256.5,309.6 L253.2,318.3 L249.6,327.1 L245.9,335.8 L242.1,344.5 L238.0,353.2 L233.8,361.9 L229.4,370.6 M301.2,178.0 L300.3,187.0 L299.4,195.9 L298.3,204.7 L297.0,213.6 L295.6,222.5 L293.9,231.4 L292.1,240.2 L290.2,249.1 L288.0,258.0 L285.7,266.8 L283.1,275.6 L280.5,284.5 L277.6,293.3 L274.6,302.1 L271.4,310.9 L268.0,319.7 L264.4,328.5 L260.7,337.3 L256.8,346.1 L252.7,354.9 L248.4,363.7 L243.9,372.4 M315.7,177.4 L314.9,186.5 L314.1,195.5 L313.0,204.6 L311.8,213.6 L310.3,222.6 L308.7,231.7 L306.9,240.7 L305.0,249.7 L302.8,258.6 L300.5,267.6 L298.0,276.6 L295.3,285.5 L292.5,294.4 L289.4,303.4 L286.2,312.3 L282.8,321.2 L279.2,330.0 L275.4,338.9 L271.5,347.8 L267.3,356.6 L263.0,365.4 L258.4,374.2 M330.3,176.7 L329.5,185.9 L328.7,195.2 L327.7,204.4 L326.5,213.6 L325.1,222.8 L323.5,231.9 L321.8,241.1 L319.8,250.2 L317.7,259.3 L315.4,268.4 L312.9,277.5 L310.2,286.5 L307.3,295.6 L304.2,304.6 L301.0,313.6 L297.6,322.6 L294.0,331.5 L290.2,340.5 L286.2,349.4 L282.0,358.3 L277.6,367.2 L273.0,376.1 M344.9,176.0 L344.1,185.4 L343.3,194.8 L342.4,204.2 L341.2,213.6 L339.8,222.9 L338.3,232.2 L336.6,241.5 L334.6,250.7 L332.5,260.0 L330.2,269.2 L327.7,278.4 L325.0,287.6 L322.2,296.7 L319.1,305.8 L315.8,314.9 L312.4,324.0 L308.7,333.0 L304.9,342.1 L300.9,351.0 L296.7,360.0 L292.2,369.0 L287.5,377.9 M359.4,175.3 L358.7,184.9 L358.0,194.5 L357.0,204.0 L355.9,213.5 L354.6,223.0 L353.1,232.5 L351.4,241.9 L349.5,251.3 L347.4,260.7 L345.1,270.0 L342.6,279.3 L339.9,288.6 L337.0,297.8 L333.9,307.0 L330.6,316.2 L327.2,325.4 L323.5,334.5 L319.6,343.6 L315.6,352.7 L311.3,361.7 L306.9,370.7 L302.0,379.7 M374.0,174.7 L373.3,184.4 L372.6,194.2 L371.7,203.9 L370.6,213.5 L369.4,223.2 L367.9,232.8 L366.2,242.3 L364.3,251.8 L362.2,261.3 L359.9,270.8 L357.4,280.2 L354.7,289.6 L351.9,299.0 L348.8,308.3 L345.5,317.6 L342.0,326.8 L338.3,336.0 L334.4,345.2 L330.3,354.3 L326.0,363.4 L321.5,372.5 L316.6,381.5 M388.6,174.0 L387.9,183.9 L387.3,193.8 L386.4,203.7 L385.4,213.5 L384.1,223.3 L382.6,233.0 L381.0,242.7 L379.1,252.4 L377.0,262.0 L374.8,271.6 L372.3,281.1 L369.6,290.6 L366.7,300.1 L363.6,309.5 L360.3,318.9 L356.8,328.2 L353.1,337.5 L349.1,346.8 L345.0,356.0 L340.6,365.1 L336.1,374.3 L331.1,383.3 M403.1,173.3 L402.5,183.4 L401.9,193.5 L401.1,203.5 L400.1,213.5 L398.9,223.4 L397.4,233.3 L395.8,243.1 L393.9,252.9 L391.9,262.7 L389.6,272.4 L387.1,282.0 L384.4,291.7 L381.5,301.2 L378.4,310.7 L375.1,320.2 L371.6,329.6 L367.8,339.0 L363.9,348.3 L359.7,357.6 L355.3,366.8 L350.7,376.0 L345.6,385.1 M417.7,172.6 L417.1,182.9 L416.5,193.2 L415.8,203.3 L414.8,213.5 L413.6,223.5 L412.2,233.6 L410.6,243.6 L408.8,253.5 L406.7,263.4 L404.5,273.2 L402.0,283.0 L399.3,292.7 L396.4,302.4 L393.3,312.0 L389.9,321.5 L386.4,331.0 L382.6,340.5 L378.6,349.9 L374.4,359.3 L370.0,368.5 L365.3,377.8 L360.2,386.9 M432.3,172.0 L431.7,182.4 L431.2,192.8 L430.5,203.2 L429.5,213.4 L428.4,223.7 L427.0,233.8 L425.4,244.0 L423.6,254.0 L421.6,264.0 L419.3,274.0 L416.9,283.9 L414.2,293.7 L411.2,303.5 L408.1,313.2 L404.8,322.9 L401.2,332.5 L397.4,342.0 L393.3,351.5 L389.1,360.9 L384.6,370.3 L379.9,379.6 L374.7,388.8 M446.8,171.3 L446.3,181.9 L445.8,192.5 L445.1,203.0 L444.2,213.4 L443.1,223.8 L441.8,234.1 L440.2,244.4 L438.4,254.6 L436.4,264.7 L434.2,274.8 L431.7,284.8 L429.0,294.7 L426.1,304.6 L422.9,314.4 L419.6,324.2 L416.0,333.9 L412.1,343.5 L408.1,353.0 L403.8,362.5 L399.3,372.0 L394.5,381.3 L389.2,390.6 M461.4,170.6 L460.9,181.4 L460.5,192.1 L459.8,202.8 L459.0,213.4 L457.9,223.9 L456.6,234.4 L455.0,244.8 L453.3,255.1 L451.3,265.4 L449.0,275.6 L446.6,285.7 L443.9,295.8 L440.9,305.7 L437.8,315.7 L434.4,325.5 L430.8,335.3 L426.9,345.0 L422.8,354.6 L418.5,364.2 L413.9,373.7 L409.2,383.1 L403.8,392.4 M475.9,169.9 L475.4,180.9 L475.1,191.8 L474.5,202.6 L473.7,213.4 L472.6,224.1 L471.4,234.7 L469.8,245.2 L468.1,255.7 L466.1,266.1 L463.9,276.4 L461.4,286.6 L458.7,296.8 L455.8,306.9 L452.6,316.9 L449.2,326.8 L445.6,336.7 L441.7,346.5 L437.6,356.2 L433.2,365.8 L428.6,375.4 L423.8,384.8 L418.3,394.2 M490.5,169.3 L490.0,180.4 L489.7,191.5 L489.2,202.5 L488.4,213.4 L487.4,224.2 L486.1,234.9 L484.7,245.6 L482.9,256.2 L480.9,266.7 L478.7,277.2 L476.3,287.5 L473.6,297.8 L470.6,308.0 L467.5,318.1 L464.0,328.2 L460.4,338.1 L456.5,348.0 L452.3,357.8 L447.9,367.5 L443.3,377.1 L438.4,386.6 L432.8,396.0 M505.1,168.6 L504.6,179.9 L504.4,191.1 L503.9,202.3 L503.1,213.3 L502.2,224.3 L500.9,235.2 L499.5,246.0 L497.7,256.8 L495.8,267.4 L493.6,278.0 L491.1,288.4 L488.4,298.8 L485.5,309.1 L482.3,319.3 L478.9,329.5 L475.2,339.5 L471.2,349.5 L467.1,359.3 L462.6,369.1 L457.9,378.8 L453.0,388.4 L447.4,397.8 M519.6,167.9 L519.2,179.4 L519.0,190.8 L518.6,202.1 L517.9,213.3 L516.9,224.4 L515.7,235.5 L514.3,246.4 L512.6,257.3 L510.6,268.1 L508.4,278.8 L506.0,289.4 L503.3,299.9 L500.3,310.3 L497.1,320.6 L493.7,330.8 L490.0,340.9 L486.0,351.0 L481.8,360.9 L477.3,370.7 L472.6,380.5 L467.6,390.1 L461.9,399.6 M251.5,188.4 L520.6,179.1 M250.0,199.6 L519.6,194.4 M248.3,210.8 L518.2,209.5 M246.3,222.1 L516.4,224.4 M243.9,233.3 L514.0,239.2 M241.3,244.6 L511.3,253.8 M238.5,255.9 L508.1,268.3 M235.3,267.3 L504.4,282.5 M231.8,278.6 L500.3,296.6 M228.1,290.0 L495.7,310.5 M224.1,301.4 L490.7,324.2 M219.8,312.8 L485.3,337.7 M215.2,324.3 L479.3,351.1 M210.3,335.8 L473.0,364.3 M205.1,347.2 L466.2,377.3 M199.7,358.8 L458.9,390.2 M193.9,370.3 L451.2,402.8" stroke="#e4de6a" stroke-width="2.4" stroke-dasharray="1.5 3.4" stroke-dashoffset="2.3" fill="none"/><path d="M257.5,180.1 L256.6,188.5 L255.5,196.9 L254.3,205.3 L252.9,213.7 L251.3,222.1 L249.6,230.6 L247.7,239.0 L245.7,247.5 L243.5,255.9 L241.1,264.4 L238.6,272.9 L235.9,281.4 L233.1,289.9 L230.1,298.4 L226.9,307.0 L223.6,315.5 L220.1,324.1 L216.4,332.6 L212.6,341.2 L208.7,349.8 L204.6,358.4 L200.3,367.0 M272.0,179.4 L271.2,188.0 L270.1,196.5 L268.9,205.1 L267.6,213.7 L266.1,222.3 L264.4,230.8 L262.5,239.4 L260.5,248.0 L258.3,256.6 L256.0,265.2 L253.4,273.8 L250.8,282.4 L247.9,291.1 L244.9,299.7 L241.7,308.3 L238.4,316.9 L234.9,325.6 L231.2,334.2 L227.3,342.8 L223.3,351.5 L219.2,360.1 L214.8,368.8 M286.6,178.7 L285.8,187.5 L284.8,196.2 L283.6,204.9 L282.3,213.7 L280.8,222.4 L279.2,231.1 L277.3,239.8 L275.3,248.6 L273.1,257.3 L270.8,266.0 L268.3,274.7 L265.6,283.5 L262.8,292.2 L259.7,300.9 L256.5,309.6 L253.2,318.3 L249.6,327.1 L245.9,335.8 L242.1,344.5 L238.0,353.2 L233.8,361.9 L229.4,370.6 M301.2,178.0 L300.3,187.0 L299.4,195.9 L298.3,204.7 L297.0,213.6 L295.6,222.5 L293.9,231.4 L292.1,240.2 L290.2,249.1 L288.0,258.0 L285.7,266.8 L283.1,275.6 L280.5,284.5 L277.6,293.3 L274.6,302.1 L271.4,310.9 L268.0,319.7 L264.4,328.5 L260.7,337.3 L256.8,346.1 L252.7,354.9 L248.4,363.7 L243.9,372.4 M315.7,177.4 L314.9,186.5 L314.1,195.5 L313.0,204.6 L311.8,213.6 L310.3,222.6 L308.7,231.7 L306.9,240.7 L305.0,249.7 L302.8,258.6 L300.5,267.6 L298.0,276.6 L295.3,285.5 L292.5,294.4 L289.4,303.4 L286.2,312.3 L282.8,321.2 L279.2,330.0 L275.4,338.9 L271.5,347.8 L267.3,356.6 L263.0,365.4 L258.4,374.2 M330.3,176.7 L329.5,185.9 L328.7,195.2 L327.7,204.4 L326.5,213.6 L325.1,222.8 L323.5,231.9 L321.8,241.1 L319.8,250.2 L317.7,259.3 L315.4,268.4 L312.9,277.5 L310.2,286.5 L307.3,295.6 L304.2,304.6 L301.0,313.6 L297.6,322.6 L294.0,331.5 L290.2,340.5 L286.2,349.4 L282.0,358.3 L277.6,367.2 L273.0,376.1 M344.9,176.0 L344.1,185.4 L343.3,194.8 L342.4,204.2 L341.2,213.6 L339.8,222.9 L338.3,232.2 L336.6,241.5 L334.6,250.7 L332.5,260.0 L330.2,269.2 L327.7,278.4 L325.0,287.6 L322.2,296.7 L319.1,305.8 L315.8,314.9 L312.4,324.0 L308.7,333.0 L304.9,342.1 L300.9,351.0 L296.7,360.0 L292.2,369.0 L287.5,377.9 M359.4,175.3 L358.7,184.9 L358.0,194.5 L357.0,204.0 L355.9,213.5 L354.6,223.0 L353.1,232.5 L351.4,241.9 L349.5,251.3 L347.4,260.7 L345.1,270.0 L342.6,279.3 L339.9,288.6 L337.0,297.8 L333.9,307.0 L330.6,316.2 L327.2,325.4 L323.5,334.5 L319.6,343.6 L315.6,352.7 L311.3,361.7 L306.9,370.7 L302.0,379.7 M374.0,174.7 L373.3,184.4 L372.6,194.2 L371.7,203.9 L370.6,213.5 L369.4,223.2 L367.9,232.8 L366.2,242.3 L364.3,251.8 L362.2,261.3 L359.9,270.8 L357.4,280.2 L354.7,289.6 L351.9,299.0 L348.8,308.3 L345.5,317.6 L342.0,326.8 L338.3,336.0 L334.4,345.2 L330.3,354.3 L326.0,363.4 L321.5,372.5 L316.6,381.5 M388.6,174.0 L387.9,183.9 L387.3,193.8 L386.4,203.7 L385.4,213.5 L384.1,223.3 L382.6,233.0 L381.0,242.7 L379.1,252.4 L377.0,262.0 L374.8,271.6 L372.3,281.1 L369.6,290.6 L366.7,300.1 L363.6,309.5 L360.3,318.9 L356.8,328.2 L353.1,337.5 L349.1,346.8 L345.0,356.0 L340.6,365.1 L336.1,374.3 L331.1,383.3 M403.1,173.3 L402.5,183.4 L401.9,193.5 L401.1,203.5 L400.1,213.5 L398.9,223.4 L397.4,233.3 L395.8,243.1 L393.9,252.9 L391.9,262.7 L389.6,272.4 L387.1,282.0 L384.4,291.7 L381.5,301.2 L378.4,310.7 L375.1,320.2 L371.6,329.6 L367.8,339.0 L363.9,348.3 L359.7,357.6 L355.3,366.8 L350.7,376.0 L345.6,385.1 M417.7,172.6 L417.1,182.9 L416.5,193.2 L415.8,203.3 L414.8,213.5 L413.6,223.5 L412.2,233.6 L410.6,243.6 L408.8,253.5 L406.7,263.4 L404.5,273.2 L402.0,283.0 L399.3,292.7 L396.4,302.4 L393.3,312.0 L389.9,321.5 L386.4,331.0 L382.6,340.5 L378.6,349.9 L374.4,359.3 L370.0,368.5 L365.3,377.8 L360.2,386.9 M432.3,172.0 L431.7,182.4 L431.2,192.8 L430.5,203.2 L429.5,213.4 L428.4,223.7 L427.0,233.8 L425.4,244.0 L423.6,254.0 L421.6,264.0 L419.3,274.0 L416.9,283.9 L414.2,293.7 L411.2,303.5 L408.1,313.2 L404.8,322.9 L401.2,332.5 L397.4,342.0 L393.3,351.5 L389.1,360.9 L384.6,370.3 L379.9,379.6 L374.7,388.8 M446.8,171.3 L446.3,181.9 L445.8,192.5 L445.1,203.0 L444.2,213.4 L443.1,223.8 L441.8,234.1 L440.2,244.4 L438.4,254.6 L436.4,264.7 L434.2,274.8 L431.7,284.8 L429.0,294.7 L426.1,304.6 L422.9,314.4 L419.6,324.2 L416.0,333.9 L412.1,343.5 L408.1,353.0 L403.8,362.5 L399.3,372.0 L394.5,381.3 L389.2,390.6 M461.4,170.6 L460.9,181.4 L460.5,192.1 L459.8,202.8 L459.0,213.4 L457.9,223.9 L456.6,234.4 L455.0,244.8 L453.3,255.1 L451.3,265.4 L449.0,275.6 L446.6,285.7 L443.9,295.8 L440.9,305.7 L437.8,315.7 L434.4,325.5 L430.8,335.3 L426.9,345.0 L422.8,354.6 L418.5,364.2 L413.9,373.7 L409.2,383.1 L403.8,392.4 M475.9,169.9 L475.4,180.9 L475.1,191.8 L474.5,202.6 L473.7,213.4 L472.6,224.1 L471.4,234.7 L469.8,245.2 L468.1,255.7 L466.1,266.1 L463.9,276.4 L461.4,286.6 L458.7,296.8 L455.8,306.9 L452.6,316.9 L449.2,326.8 L445.6,336.7 L441.7,346.5 L437.6,356.2 L433.2,365.8 L428.6,375.4 L423.8,384.8 L418.3,394.2 M490.5,169.3 L490.0,180.4 L489.7,191.5 L489.2,202.5 L488.4,213.4 L487.4,224.2 L486.1,234.9 L484.7,245.6 L482.9,256.2 L480.9,266.7 L478.7,277.2 L476.3,287.5 L473.6,297.8 L470.6,308.0 L467.5,318.1 L464.0,328.2 L460.4,338.1 L456.5,348.0 L452.3,357.8 L447.9,367.5 L443.3,377.1 L438.4,386.6 L432.8,396.0 M505.1,168.6 L504.6,179.9 L504.4,191.1 L503.9,202.3 L503.1,213.3 L502.2,224.3 L500.9,235.2 L499.5,246.0 L497.7,256.8 L495.8,267.4 L493.6,278.0 L491.1,288.4 L488.4,298.8 L485.5,309.1 L482.3,319.3 L478.9,329.5 L475.2,339.5 L471.2,349.5 L467.1,359.3 L462.6,369.1 L457.9,378.8 L453.0,388.4 L447.4,397.8 M519.6,167.9 L519.2,179.4 L519.0,190.8 L518.6,202.1 L517.9,213.3 L516.9,224.4 L515.7,235.5 L514.3,246.4 L512.6,257.3 L510.6,268.1 L508.4,278.8 L506.0,289.4 L503.3,299.9 L500.3,310.3 L497.1,320.6 L493.7,330.8 L490.0,340.9 L486.0,351.0 L481.8,360.9 L477.3,370.7 L472.6,380.5 L467.6,390.1 L461.9,399.6 M251.5,188.4 L520.6,179.1 M250.0,199.6 L519.6,194.4 M248.3,210.8 L518.2,209.5 M246.3,222.1 L516.4,224.4 M243.9,233.3 L514.0,239.2 M241.3,244.6 L511.3,253.8 M238.5,255.9 L508.1,268.3 M235.3,267.3 L504.4,282.5 M231.8,278.6 L500.3,296.6 M228.1,290.0 L495.7,310.5 M224.1,301.4 L490.7,324.2 M219.8,312.8 L485.3,337.7 M215.2,324.3 L479.3,351.1 M210.3,335.8 L473.0,364.3 M205.1,347.2 L466.2,377.3 M199.7,358.8 L458.9,390.2 M193.9,370.3 L451.2,402.8" stroke="#f4f4ec" stroke-width="1.6" stroke-dasharray="0.8 4.1" stroke-dashoffset="0.8" fill="none" opacity="0.8"/></g><path d="M270,188 L325.5,187 A36.8,28.5 0 0 0 399.5,185 L502,180" stroke="#e8e070" stroke-width="1.3" fill="none" stroke-dasharray="3 1.5"/><path d="M321,187 L323,216 M327,192 Q332,214 350,224 M404,185 L397,216 M396,192 Q392,212 376,222 M359.7,210.1 L364.4,204.5 L368.1,211.1 L372.8,206.4 M366.4,210 L367.5,240 M363.6,239 L416.8,241.8 L430.7,253.9 L367,253 Z M363.6,239 L347,268 M384,241 L367,273 M347,268 L358,281 L370,274 L347,268" stroke="#ece472" stroke-width="1.1" fill="none"/><path d="M554,402 L553,351 M554,402 L621,410 M554,402 L540,441" stroke="#1a2a96" stroke-width="1.6" fill="none"/><g fill="#fff" font-family="Liberation Sans" font-weight="bold" font-size="10"><text x="544" y="351">Y</text><text x="622" y="417">X</text><text x="530" y="452">Z</text></g></svg><!--/VIEW--></div>
<div class="a" id="status"><div style="position:absolute;left:1px;top:1px;width:69px;height:6px;border-left:1px solid #9a9a9a;border-top:1px solid #9a9a9a;border-right:1px solid #fff"></div><div style="position:absolute;left:72px;top:1px;width:51px;height:6px;border-left:1px solid #9a9a9a;border-top:1px solid #9a9a9a;border-right:1px solid #fff"></div><div style="position:absolute;left:125px;top:1px;width:72px;height:6px;border-left:1px solid #9a9a9a;border-top:1px solid #9a9a9a;border-right:1px solid #fff"></div><div style="position:absolute;left:199px;top:1px;width:63px;height:6px;border-left:1px solid #9a9a9a;border-top:1px solid #9a9a9a;border-right:1px solid #fff"></div><div style="position:absolute;left:264px;top:1px;width:49px;height:6px;border-left:1px solid #9a9a9a;border-top:1px solid #9a9a9a;border-right:1px solid #fff"></div><div style="position:absolute;left:315px;top:1px;width:61px;height:6px;border-left:1px solid #9a9a9a;border-top:1px solid #9a9a9a;border-right:1px solid #fff"></div><div style="position:absolute;left:378px;top:1px;width:48px;height:6px;border-left:1px solid #9a9a9a;border-top:1px solid #9a9a9a;border-right:1px solid #fff"></div><div style="position:absolute;left:428px;top:1px;width:50px;height:6px;border-left:1px solid #9a9a9a;border-top:1px solid #9a9a9a;border-right:1px solid #fff"></div><div style="position:absolute;left:480px;top:1px;width:20px;height:6px;border-left:1px solid #9a9a9a;border-top:1px solid #9a9a9a;border-right:1px solid #fff"></div><div style="position:absolute;left:502px;top:1px;width:28px;height:6px;border-left:1px solid #9a9a9a;border-top:1px solid #9a9a9a;border-right:1px solid #fff"></div><div style="position:absolute;left:532px;top:1px;width:26px;height:6px;border-left:1px solid #9a9a9a;border-top:1px solid #9a9a9a;border-right:1px solid #fff"></div><div style="position:absolute;left:560px;top:1px;width:25px;height:6px;border-left:1px solid #9a9a9a;border-top:1px solid #9a9a9a;border-right:1px solid #fff"></div><div style="position:absolute;left:587px;top:1px;width:20px;height:6px;border-left:1px solid #9a9a9a;border-top:1px solid #9a9a9a;border-right:1px solid #fff"></div><div style="position:absolute;left:609px;top:1px;width:17px;height:6px;border-left:1px solid #9a9a9a;border-top:1px solid #9a9a9a;border-right:1px solid #fff"></div></div>

<div class="a" id="dlg">
  <div class="lbl" style="left:5px;top:4px;font-size:9.7px;color:#505a66">Extrude by Increment</div>
  <div class="a" style="left:133px;top:4px;width:25px;height:13px;border:1px solid #8e9bab;border-radius:3px;background:linear-gradient(#e9eef4,#d0dae5)"><svg style="position:absolute;left:7px;top:1px" width="10" height="9"><path d="M1.5,1.5 L8.5,7.5 M8.5,1.5 L1.5,7.5" stroke="#5a6470" stroke-width="2.6"/><path d="M1.5,1.5 L8.5,7.5 M8.5,1.5 L1.5,7.5" stroke="#eef1f5" stroke-width="1"/></svg></div>
  <div class="in" style="left:2px;top:20px;width:157px;height:324px;border-top:1px solid #b4bec8"></div>
  <div class="combo" style="left:3px;top:22px;width:156px;height:15px;padding:2px 0 0 2px">UCS 1:[Cylindrical]<div class="dd" style="height:12px;width:14px"></div></div>
  <div class="grp" style="left:4px;top:45px;width:154px;height:96px"></div>
  <div class="lbl" style="left:8px;top:39px;background:#f0f0f0;padding:0 1px">Increments</div>
  <div class="lbl" style="left:24px;top:58px">R</div>
  <div class="lbl" style="left:24px;top:77px">&#x3B8;</div>
  <div class="lbl" style="left:25px;top:96px">Z</div>
  <div class="fld" style="left:37px;top:54px;width:102px;height:16px">0.000<span style="font-size:8px">&#x2009;x&#x2009;</span>10<sup>0</sup></div>
  <div class="fld" style="left:37px;top:73px;width:102px;height:16px">-1.421<span style="font-size:8px">&#x2009;x&#x2009;</span>10<sup>-14</sup></div>
  <div class="fld" style="left:37px;top:92px;width:102px;height:16px">3.181<span style="font-size:8px">&#x2009;x&#x2009;</span>10<sup>1</sup></div>
  <div class="a" style="left:7px;top:116px;width:67px;height:20px;background:#f0f0f0;border:1px solid;border-color:#fff #6a6a6a #6a6a6a #fff;box-shadow:inset -1px -1px 0 #a0a0a0"></div>
  <div class="lbl" style="left:14px;top:121px"><u>S</u>et by Points</div>
  <div class="a" style="left:3px;top:146px;width:158px;height:173px;border:1px solid #d6dbe0;border-top-color:#c9ced3"></div>
  <div class="a" style="left:3px;top:163px;width:157px;height:156px;border:1px solid #8f8f8f;border-top-color:#bdbdbd;border-left-color:#bdbdbd;background:#f0f0f0"></div>
  <div class="a" style="left:5px;top:148px;width:56px;height:16px;background:#f0f0f0"></div>
  <div class="a" style="left:60px;top:148px;width:41px;height:15px;border-left:1px solid #7a7a7a;border-right:1px solid #707070;box-shadow:inset 1px 0 0 #fff;background:#f0f0f0"></div>
  <div class="lbl" style="left:9px;top:152px;color:#2c3a78">Parameters</div>
  <div class="lbl" style="left:64px;top:151px">Targets</div>
  <div class="lbl" style="left:7px;top:177px">Property Increment</div>
  <div class="lbl" style="left:56px;top:198px">Repeat</div>
  <div class="fld" style="left:88px;top:173px;width:67px;height:16px;border-color:#b9b9b9">0<div class="spin"></div></div>
  <div class="fld" style="left:88px;top:194px;width:67px;height:16px;border-color:#b9b9b9">1<div class="spin"></div></div>
  <div class="grp" style="left:6px;top:219px;width:148px;height:44px;border-color:#c9ced3"></div>
  <div class="lbl" style="left:12px;top:214px;background:#f0f0f0;padding:0 1px">Source</div>
  <div class="radio" style="left:13px;top:231px"></div><div class="lbl" style="left:26px;top:231px">Leave</div>
  <div class="radio" style="left:83px;top:231px"></div><div class="lbl" style="left:96px;top:231px">Erase</div>
  <div class="radio" style="left:13px;top:248px"><div style="position:absolute;left:2px;top:2px;width:4px;height:4px;border-radius:50%;background:#1a5a78"></div></div><div class="lbl" style="left:26px;top:248px">Move</div>
  <div class="radio" style="left:83px;top:248px"></div><div class="lbl" style="left:96px;top:248px">Copy</div>
  <div class="a" style="left:6px;top:326px;width:10px;height:10px;border:1px solid #9c9c9c;background:linear-gradient(135deg,#dcdcdc,#fafafa)"></div>
  <div class="lbl" style="left:18px;top:326px">Keep Selection</div>
  <div class="a" style="left:102px;top:325px;width:56px;height:16px;border:1px solid #3c7fb1;border-radius:3px;background:linear-gradient(#eaf6fd 0,#d9f0fc 45%,#bee6fd 50%,#a7d9f5 100%);box-shadow:inset 0 0 0 1px #a8dcf8"></div>
  <div class="lbl" style="left:117px;top:328px">Apply</div>
</div>
</body></html>
